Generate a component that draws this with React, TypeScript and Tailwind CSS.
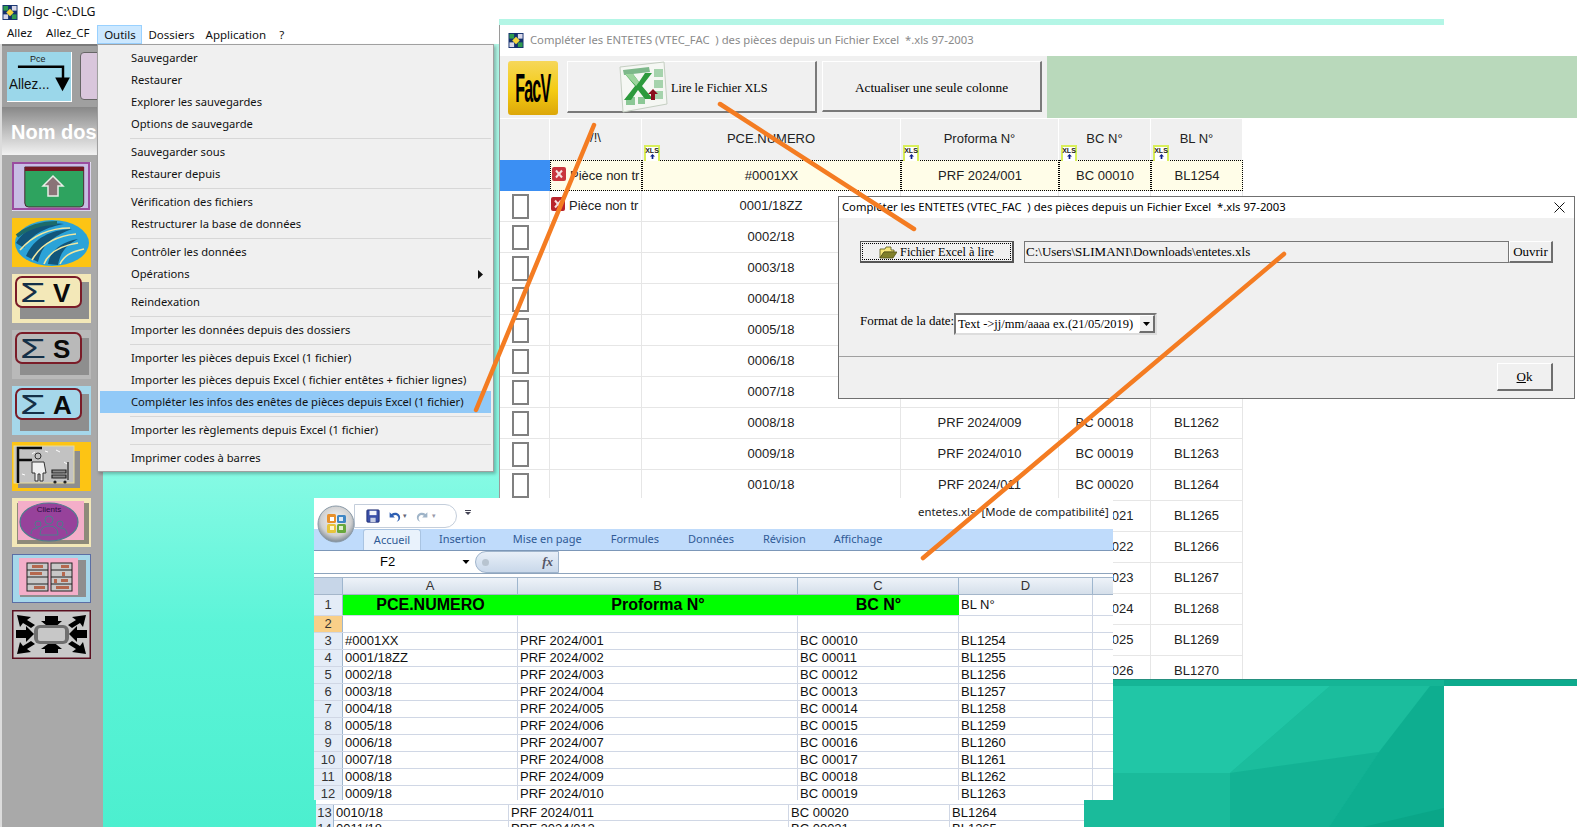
import React from "react";

const uiFont = "font-['Noto_Sans',sans-serif]";
const arial = "font-['Liberation_Sans',Arial,sans-serif]";
const serif = "font-['Liberation_Serif','Times_New_Roman',serif]";

const menuGroups = [
  ["Sauvegarder", "Restaurer", "Explorer les sauvegardes", "Options de sauvegarde"],
  ["Sauvegarder sous", "Restaurer depuis"],
  ["Vérification des fichiers", "Restructurer la base de données"],
  ["Contrôler les données", "Opérations"],
  ["Reindexation"],
  ["Importer les données depuis des dossiers"],
  [
    "Importer les pièces depuis Excel (1 fichier)",
    "Importer les pièces depuis Excel ( fichier entêtes + fichier lignes)",
    "Compléter les infos des enêtes de pièces depuis Excel (1 fichier)",
  ],
  ["Importer les règlements depuis Excel (1 fichier)"],
  ["Imprimer codes à barres"],
];

const pad = (n: number, len: number) => String(n).padStart(len, "0");

const mainRows = Array.from({ length: 17 }).map((_, i) => ({
  pce: i === 0 ? "#0001XX" : i === 1 ? "0001/18ZZ" : `${pad(i, 4)}/18`,
  prf: `PRF 2024/${pad(i + 1, 3)}`,
  bc: `BC ${pad(i + 10, 5)}`,
  bl: `BL${1254 + i}`,
}));

const sheetRows = mainRows.slice(0, 10);

function AppIcon() {
  return (
    <svg viewBox="0 0 16 16" className="w-[16px] h-[15px] shrink-0">
      <rect width="16" height="16" fill="#14306e" />
      <rect x="1" y="1" width="5" height="5" fill="#2f9a4f" />
      <rect x="10" y="1" width="5" height="5" fill="#d8d8e8" />
      <rect x="1" y="10" width="5" height="5" fill="#d8d8e8" />
      <rect x="10" y="10" width="5" height="5" fill="#2f9a4f" />
      <path d="M8 4l4 4-4 4-4-4z" fill="#f5d63a" />
    </svg>
  );
}

function XlsTag() {
  return (
    <div className="absolute left-[2px] -bottom-[1px] w-[16px] h-[16px] bg-white border-x-2 border-t-2 border-[#d9ef5a] flex flex-col items-center leading-none">
      <span className={`${arial} text-[7px] font-bold text-[#222] leading-[7px]`}>XLS</span>
      <svg viewBox="0 0 8 6" className="w-[7px] h-[5px]">
        <path d="M4 0l3 3H5v3H3V3H1z" fill="#0b1f8a" />
      </svg>
    </div>
  );
}

function RedX({ dim }: { dim?: boolean }) {
  return (
    <svg viewBox="0 0 14 14" className="w-[14px] h-[14px] shrink-0 -mt-[4px]">
      <rect width="14" height="14" rx="2" fill={dim ? "#b8242c" : "#c9363d"} />
      <path d="M4 3.5l6 7M10 3.5l-6 7" stroke="#f5e0e0" strokeWidth="2" />
    </svg>
  );
}

function ExcelLogo() {
  return (
    <svg viewBox="0 0 50 52" className="w-[50px] h-[52px] shrink-0">
      <path d="M2 6l44-5 3 42-44 8z" fill="#f5f7f3" stroke="#c5cfc2" />
      <path d="M5 9l26-3 1 5-26 3z" fill="#7db88a" />
      <path d="M36 8h9v8h-9zM36 19h9v8h-9zM36 30h9v8h-9z" fill="#a5d3ac" />
      <path d="M8 36h9v8H8zM20 36h7v7h-7z" fill="#8cc896" />
      <path d="M7 13h8l6 8 6-9h7l-10 13 11 13h-8l-7-9-7 10H6l11-14z" fill="#2c9a3c" />
      <path d="M7 13h8l6 8-3 4z" fill="#9bd49c" />
      <path d="M30 33l5-5 5 5h-3v6h-4v-6z" fill="#8a0f1c" />
    </svg>
  );
}

function SigmaBadge({ bg, inner, letter }: { bg: string; inner: string; letter: string }) {
  return (
    <svg viewBox="0 0 79 49" className="w-[79px] h-[49px]">
      <rect width="79" height="49" fill={bg} />
      <rect x="8" y="8" width="69" height="37" fill="#8e8e8e" />
      <rect x="4" y="3" width="65" height="30" rx="6" fill={inner} stroke="#7a1c28" strokeWidth="2" />
      <text transform="translate(8 28) scale(1.5 1)" fontFamily="Liberation Sans" fontSize="28" fill="#153048">Σ</text>
      <text x="41" y="28" fontFamily="Liberation Sans" fontWeight="bold" fontSize="26" fill="#0a0a0a">{letter}</text>
    </svg>
  );
}

function IconUpload() {
  return (
    <svg viewBox="0 0 79 49" className="w-[79px] h-[49px]">
      <rect width="79" height="49" fill="#c8bde4" stroke="#f4f0fa" />
      <rect x="1" y="1" width="76" height="46" fill="none" stroke="#9a4d9f" strokeWidth="2" />
      <path d="M15 5h64v36q0 4-4 4H19q-4 0-4-4z" transform="translate(-1 0) scale(.92 1)" fill="#2ea35f" stroke="#4a2230" />
      <rect x="13" y="5" width="59" height="4" fill="#731820" />
      <path d="M41 14l10 10h-5v10H36V24h-5z" fill="#8a7377" stroke="#e8efe8" strokeWidth="1.5" />
    </svg>
  );
}

function IconGlobe() {
  return (
    <svg viewBox="0 0 79 49" className="w-[79px] h-[49px]">
      <rect width="79" height="49" fill="#fdc414" />
      <ellipse cx="40" cy="25" rx="37" ry="23" fill="#2ba3d8" />
      <path d="M4 25C14 8 34 4 52 6 36 9 20 15 12 30zM14 38C22 20 38 12 60 11 42 18 30 26 26 44zM36 46c2-12 12-22 30-25-12 6-18 14-20 26z" fill="#12557a" />
      <path d="M8 32c14-16 30-22 50-22M20 42c8-14 22-24 44-26M32 46c4-10 14-18 34-21M48 46c4-8 10-12 24-15" stroke="#f1e7a0" strokeWidth="1.6" fill="none" />
      <path d="M5 18c10-8 24-13 40-13" stroke="#1c6b6a" strokeWidth="4" fill="none" />
    </svg>
  );
}

function IconStaff() {
  return (
    <svg viewBox="0 0 79 49" className="w-[79px] h-[49px]">
      <rect width="79" height="49" fill="#fdc414" />
      <rect x="6" y="9" width="62" height="37" fill="#8e8e8e" />
      <rect x="2" y="4" width="60" height="37" fill="#c2c2c2" stroke="#e7dc9c" />
      <path d="M6 7h4M20 12l3-2M44 8l4 2M52 20l3 2M10 32l3 1M40 36l3-1M33 9l3 1M48 30l4 1" stroke="#fff" />
      <path d="M6 41V6h24M6 18h14" stroke="#0a0a0a" strokeWidth="2.5" fill="none" />
      <circle cx="26" cy="14" r="3" fill="none" stroke="#333" />
      <path d="M20 20h12l2 11h-3v8h-3v-7h-2v7h-3v-8h-3z" fill="#f0f0f0" stroke="#333" />
      <path d="M40 28h14v3H40zM40 33h14v3H40zM56 20v18" stroke="#222" strokeWidth="1.2" fill="#888" />
      <circle cx="43" cy="40" r="1.6" fill="#222" />
      <circle cx="53" cy="40" r="1.6" fill="#222" />
    </svg>
  );
}

function IconClients() {
  return (
    <svg viewBox="0 0 79 49" className="w-[79px] h-[49px]">
      <rect width="79" height="49" fill="#f3e8b8" />
      <rect x="5" y="5" width="72" height="41" fill="#8e8a7a" />
      <rect x="6" y="3" width="66" height="39" fill="#f4aec9" />
      <ellipse cx="37" cy="24" rx="29" ry="19" fill="#97429b" stroke="#4d7c8d" strokeWidth="1.2" />
      <text x="37" y="14" textAnchor="middle" fontFamily="Liberation Sans" fontSize="8" fill="#2a0a40">Clients</text>
      <circle cx="37" cy="22" r="4" fill="none" stroke="#4d7c8d" />
      <circle cx="26" cy="26" r="3" fill="none" stroke="#4d7c8d" />
      <circle cx="48" cy="26" r="3" fill="none" stroke="#4d7c8d" />
      <path d="M28 37q0-9 9-9t9 9zM19 36q0-6 7-6M55 36q0-6-7-6" fill="none" stroke="#4d7c8d" />
    </svg>
  );
}

function IconShelves() {
  return (
    <svg viewBox="0 0 79 49" className="w-[79px] h-[49px]">
      <rect x=".5" y=".5" width="78" height="48" fill="#a5d7ea" stroke="#5b6ea5" />
      <rect x="8" y="6" width="66" height="37" fill="#8e8e8e" />
      <rect x="7" y="4" width="59" height="37" fill="#f4aec9" />
      <rect x="15" y="9" width="21" height="28" fill="#c8c8c8" stroke="#222" />
      <rect x="39" y="9" width="21" height="28" fill="#c8c8c8" stroke="#222" />
      <path d="M15 16h21M15 23h21M15 30h21M39 16h21M39 23h21M39 30h21" stroke="#222" />
      <path d="M20 11h11v3H20zM18 18h12v3H18zM22 32h11v3H22zM49 11h8v3h-8zM42 25h3v4h-3zM49 25h7v3h-7zM44 32h13v3H44zM50 18h3v4h-3z" fill="#b5684e" />
    </svg>
  );
}

function IconResize() {
  return (
    <svg viewBox="0 0 79 49" className="w-[79px] h-[49px]">
      <rect width="79" height="49" fill="#c9c9c9" />
      <rect x=".75" y=".75" width="77.5" height="47.5" fill="none" stroke="#5a1020" strokeWidth="1.5" />
      <path d="M5 5l14 2-4 3 8 5-4 3-8-5-3 4zM74 5l-14 2 4 3-8 5 4 3 8-5 3 4zM5 44l14-2-4-3 8-5-4-3-8 5-3-4zM74 44l-14-2 4-3-8-5 4-3 8 5 3-4zM33 6h13v5h4l-10 9-11-9h4zM33 43h13v-4h4l-10-8-11 8h4zM4 20h10v-4l8 8-8 8v-4H4zM75 20H65v-4l-8 8 8 8v-4h10z" fill="#000" />
      <rect x="22" y="15" width="35" height="19" rx="6" fill="#6f6f6f" />
      <rect x="26" y="18" width="27" height="13" rx="2" fill="#c7c7c7" />
    </svg>
  );
}

function Wallpaper() {
  return (
    <>
      <div className="absolute left-[103px] top-[19px] w-[1341px] h-[808px] bg-[linear-gradient(180deg,#b4f6e6_0%,#86fae4_56%,#5cf4d8_75%,#4cefcf_100%)]" />
      <div className="absolute left-[1084px] top-[679px] w-[360px] h-[148px] bg-[#1abb9b]">
        <svg viewBox="0 0 360 148" className="w-full h-full">
          <path d="M0 0h360v7H0z" fill="#15b596" />
          <path d="M29 7h217L146 94H29z" fill="#21c6a6" />
          <path d="M246 7h100l-51 66-149 21z" fill="#1bbd9d" />
          <path d="M146 94l149-21-50 75h-99z" fill="#13b294" />
          <path d="M346 7h14v141H245l50-75z" fill="#0eae90" />
          <path d="M279 148l81-19v19z" fill="#0aa688" />
          <path d="M0 .5h360" stroke="#24907f" />
        </svg>
      </div>
      <div className="absolute left-[1444px] top-[679px] w-[133px] h-[7px] bg-[#0dab8d] border-t border-[#24907f]" />
    </>
  );
}

function Sidebar() {
  return (
    <div className="absolute left-0 top-[44px] w-[103px] h-[783px] flex flex-col bg-[#a9a9a9] border-l-2 border-[#dcdcdc]">
      <div className="h-[63px] bg-[#a0a0a0] border-t-2 border-[#7a7a7a] flex gap-[8px] pl-[5px] pt-[6px]">
        <div className="relative w-[65px] h-[50px] bg-[#9bd7ea] border-b border-r border-white shrink-0">
          <span className={`absolute left-[23px] top-[1px] ${arial} text-[9px] text-[#222]`}>Pce</span>
          <span className={`absolute left-[2px] top-[23px] ${arial} text-[15px] leading-[17px] scale-x-90 origin-left text-[#111]`}>Allez...</span>
          <svg viewBox="0 0 65 50" className="absolute inset-0 w-full h-full">
            <path d="M11 15h46v16" stroke="#000" strokeWidth="2.5" fill="none" />
            <path d="M49 26h15l-7.500 14z" fill="#000" />
          </svg>
        </div>
        <div className="w-[30px] h-[48px] rounded-[4px] border border-[#666] bg-[#d9c6dc] shrink-0" />
      </div>
      <div className={`h-[48px] bg-[linear-gradient(180deg,#888888_0%,#c4c4c4_55%,#f2f2f2_100%)] flex items-center pl-[9px] pt-[2px] ${arial}`}>
        <span className="text-[20px] font-bold text-white whitespace-nowrap">Nom dos</span>
      </div>
      <div className="flex flex-col gap-[7px] pl-[10px] pt-[7px]">
        <IconUpload />
        <IconGlobe />
        <SigmaBadge bg="#f3e8b8" inner="#f3e8b8" letter="V" />
        <SigmaBadge bg="#b9b9b9" inner="#b9b9b9" letter="S" />
        <SigmaBadge bg="#a5d7ea" inner="#a5d7ea" letter="A" />
        <IconStaff />
        <IconClients />
        <IconShelves />
        <IconResize />
      </div>
    </div>
  );
}

function TopBars() {
  return (
    <div className={`absolute left-0 top-0 w-[499px] h-[44px] bg-white ${uiFont} text-[11.5px] text-[#111]`}>
      <div className="h-[25px] flex items-center gap-[5px] pl-[2px]">
        <AppIcon />
        <span className="whitespace-nowrap text-[12.3px]">Dlgc -C:\DLG</span>
      </div>
      <div className="relative h-[19px] flex items-center">
        <span className="ml-[7px] -mt-[3px]">Allez</span>
        <span className="ml-[14px] -mt-[3px]">Allez_CF</span>
        <span className="ml-[8px] h-[19px] w-[45px] flex items-center justify-center bg-[#cce8ff] border border-[#99d1ff]">Outils</span>
        <span className="ml-[6px]">Dossiers</span>
        <span className="ml-[11px]">Application</span>
        <span className="ml-[13px]">?</span>
      </div>
    </div>
  );
}

function ToolsMenu() {
  return (
    <div className={`absolute left-[97px] top-[44px] w-[397px] h-[428px] bg-[#f0f0f0] border border-[#a0a0a0] shadow-[2px_2px_3px_rgba(0,0,0,0.25)] py-[2px] ${uiFont} text-[11.2px] text-[#111]`}>
      {menuGroups.map((group, g) => (
        <div key={g}>
          {g > 0 && (
            <div className="h-[6px] flex items-center pl-[32px] pr-[2px]">
              <div className="h-px w-full bg-[#d7d7d7]" />
            </div>
          )}
          {group.map((item) => (
            <div
              key={item}
              className={`mx-[2px] h-[22px] flex items-center justify-between pl-[31px] pr-[8px] whitespace-nowrap ${
                item.startsWith("Compléter") ? "bg-[#91c9f7]" : ""
              }`}
            >
              <span>{item}</span>
              {item === "Opérations" && (
                <svg viewBox="0 0 5 9" className="w-[5px] h-[9px]">
                  <path d="M0 0l5 4.500-5 4.500z" fill="#111" />
                </svg>
              )}
            </div>
          ))}
        </div>
      ))}
    </div>
  );
}

function MainWindow() {
  const cellBase = "flex items-center justify-center overflow-hidden whitespace-nowrap";
  return (
    <div className="absolute left-[499px] top-[25px] w-[1078px] h-[654px] bg-white overflow-hidden flex flex-col border-l border-[#9a9a9a]">
      <div className={`h-[31px] shrink-0 flex items-center gap-[6px] pl-[8px] ${uiFont} text-[11.25px] text-[#8a8a8a]`}>
        <AppIcon />
        <span className="whitespace-pre">Compléter les ENTETES (VTEC_FAC  ) des pièces depuis un Fichier Excel  *.xls 97-2003</span>
      </div>
      <div className="h-[62px] shrink-0 flex bg-[#f0f0f0]">
        <div className="w-[547px] shrink-0 flex items-start gap-[5px] pl-[8px] pt-[5px]">
          <div className={`w-[50px] h-[54px] shrink-0 rounded-[3px] bg-[linear-gradient(180deg,#f6d75a_0%,#f4cb12_55%,#dca70a_100%)] flex items-center justify-center overflow-hidden ${arial}`}>
            <span className="text-[40px] font-bold text-black scale-x-[0.4] whitespace-nowrap tracking-tighter">FacV</span>
          </div>
          <div className={`relative ml-[4px] w-[250px] h-[52px] shrink-0 bg-[#f0f0f0] border-t border-l border-white border-r-2 border-b-2 border-r-[#7a7a7a] border-b-[#7a7a7a] flex items-center pl-[50px] gap-[3px] ${serif} text-[12.3px] text-black`}>
            <ExcelLogo />
            <span className="mt-[4px]">Lire le Fichier XLS</span>
          </div>
          <div className={`w-[220px] h-[51px] shrink-0 bg-[#f0f0f0] border-t border-l border-white border-r-2 border-b-2 border-r-[#7a7a7a] border-b-[#7a7a7a] flex items-center justify-center pt-[3px] ${serif} text-[13.3px] text-black`}>
            Actualiser une seule colonne
          </div>
        </div>
        <div className="flex-1 bg-[#b9d9bb]" />
      </div>
      <div className={`w-[743px] ${arial} text-[13px] text-[#222]`}>
        <div className="grid grid-cols-[50px_92px_259px_158px_92px_92px] h-[41px] mt-[1px] bg-[#f0f0f0]">
          <div className="border-r border-white" />
          <div className="border-r border-white flex items-center justify-center pb-[3px]">/!\</div>
          {["PCE.NUMERO", "Proforma N°", "BC N°", "BL N°"].map((h) => (
            <div key={h} className="relative border-r border-white flex items-center justify-center pb-[3px] leading-none">
              {h}
              <XlsTag />
            </div>
          ))}
        </div>
        {mainRows.map((row, i) => {
          const cell =
            i === 0
              ? `${cellBase} bg-[#fffde8] border border-dotted border-black`
              : `${cellBase} border-r border-[#e6e6e6]`;
          return (
            <div key={row.pce} className={`grid grid-cols-[50px_92px_259px_158px_92px_92px] h-[31px] ${i === 0 ? "" : "border-b border-[#e6e6e6]"}`}>
              {i === 0 ? (
                <div className="bg-[#3b8ff3]" />
              ) : (
                <div className="border-r border-[#e6e6e6] flex items-center pl-[12px]">
                  <div className="w-[17px] h-[25px] bg-white border-2 border-[#808080]" />
                </div>
              )}
              <div className={`${cell} !justify-start pl-px gap-[4px]`}>
                {i < 2 && <RedX dim={i === 1} />}
                {i < 2 && <span>Pièce non tr</span>}
              </div>
              <div className={cell}>{row.pce}</div>
              <div className={cell}>{row.prf}</div>
              <div className={cell}>{row.bc}</div>
              <div className={cell}>{row.bl}</div>
            </div>
          );
        })}
      </div>
    </div>
  );
}

function FolderIcon() {
  return (
    <svg viewBox="0 0 18 13" className="w-[18px] h-[13px] shrink-0">
      <path d="M1 3h5l1-2h5v3h3v2H5L1 12z" fill="#f5e67a" stroke="#55551a" strokeWidth=".8" />
      <path d="M5 6h13l-4 6H1z" fill="#80802a" stroke="#55551a" strokeWidth=".8" />
    </svg>
  );
}

function ImportDialog() {
  const raised = "bg-[#f0f0f0] border-t border-l border-white border-r-2 border-b-2 border-r-[#6e6e6e] border-b-[#6e6e6e]";
  return (
    <div className="absolute left-[838px] top-[196px] w-[737px] h-[203px] flex flex-col bg-[#f0f0f0] border border-[#707070]">
      <div className={`h-[21px] shrink-0 bg-white flex items-center justify-between pl-[3px] pr-[9px] ${uiFont} text-[11.25px] text-black`}>
        <span className="whitespace-pre">Compléter les ENTETES (VTEC_FAC  ) des pièces depuis un Fichier Excel  *.xls 97-2003</span>
        <svg viewBox="0 0 11 11" className="w-[11px] h-[11px]">
          <path d="M.5.5l10 10M10.500.5l-10 10" stroke="#111" />
        </svg>
      </div>
      <div className={`h-[138px] shrink-0 ${serif} text-[13px] text-black pl-[21px] pr-[21px] pt-[23px]`}>
        <div className="flex items-stretch h-[22px]">
          <div className="w-[154px] flex border border-[#555] bg-[#f0f0f0] border-r-2 border-b-2 p-px">
            <div className="flex-1 flex items-center justify-center gap-[3px] pt-[2px] border border-dotted border-black text-[12.3px]">
              <FolderIcon />
              <span>Fichier Excel à lire</span>
            </div>
          </div>
          <div className="ml-[10px] flex-1 flex items-center pl-px bg-[#f0f0f0] border border-[#777]">
            C:\Users\SLIMANI\Downloads\entetes.xls
          </div>
          <div className={`w-[44px] flex items-center justify-center ${raised}`}>Ouvrir</div>
        </div>
        <div className="flex items-center mt-[50px] h-[22px]">
          <span className="w-[94px] shrink-0 whitespace-nowrap -mt-[7px]">Format de la date:</span>
          <div className="w-[203px] h-[22px] flex items-center justify-between bg-white border-2 border-t-[#777] border-l-[#777] border-b-[#ddd] border-r-[#ddd] pl-[2px]">
            <span className="whitespace-nowrap text-[12.5px]">Text -&gt;jj/mm/aaaa ex.(21/05/2019)</span>
            <div className={`w-[16px] h-[18px] flex items-center justify-center ${raised}`}>
              <svg viewBox="0 0 7 4" className="w-[7px] h-[4px]">
                <path d="M0 0h7L3.500 4z" fill="#000" />
              </svg>
            </div>
          </div>
        </div>
      </div>
      <div className={`flex-1 border-t border-[#a0a0a0] flex justify-end items-start pt-[6px] pr-[21px] ${serif} text-[13px]`}>
        <div className={`w-[56px] h-[28px] flex items-center justify-center ${raised}`}>
          <span><u>O</u>k</span>
        </div>
      </div>
    </div>
  );
}

function OfficeOrb() {
  return (
    <svg viewBox="0 0 38 38" className="absolute left-[3px] top-[7px] w-[38px] h-[38px]">
      <defs>
        <radialGradient id="orb" cx="50%" cy="40%" r="60%">
          <stop offset="0%" stopColor="#f8f8f8" />
          <stop offset="70%" stopColor="#cfcfcf" />
          <stop offset="100%" stopColor="#7f8a94" />
        </radialGradient>
      </defs>
      <circle cx="19" cy="19" r="18" fill="url(#orb)" stroke="#8a9aa8" />
      <rect x="10" y="9" width="9" height="9" rx="1.5" fill="#e8912c" />
      <rect x="20" y="10" width="9" height="8" rx="1.5" fill="#3f86c4" />
      <rect x="10" y="19" width="9" height="9" rx="1.5" fill="#e8c43a" />
      <rect x="20" y="19" width="9" height="9" rx="1.5" fill="#68a83c" />
      <rect x="13" y="12" width="4" height="4" fill="#fff" />
      <rect x="22" y="12" width="4" height="4" fill="#dbe9f5" />
      <rect x="13" y="21" width="4" height="4" fill="#fff5cf" />
      <rect x="22" y="21" width="4" height="4" fill="#dff0cf" />
    </svg>
  );
}

function SheetRow({ label, cols, row, selected }: { label: string; cols: string; row: string[]; selected?: boolean }) {
  return (
    <div className={`grid ${cols} h-[17px] border-b border-[#d0d7e5] leading-[16px]`}>
      <div className={`text-center text-[13px] border-r border-[#9eb6ce] ${selected ? "bg-[#f9cf88]" : "bg-[#e4ecf7]"} text-[#333]`}>{label}</div>
      {row.map((v, i) => (
        <div key={i} className="pl-[2px] border-r border-[#d0d7e5] overflow-hidden whitespace-nowrap">{v}</div>
      ))}
      <div />
    </div>
  );
}

function ExcelWindow() {
  const cols = "grid-cols-[29px_175px_280px_161px_134px_17px]";
  const tabs = ["Insertion", "Mise en page", "Formules", "Données", "Révision", "Affichage"];
  const tabGaps = ["ml-[18px]", "ml-[27px]", "ml-[29px]", "ml-[29px]", "ml-[29px]", "ml-[28px]"];
  return (
    <div className="absolute left-[314px] top-[498px] w-[799px] h-[302px] bg-white flex flex-col overflow-hidden">
      <div className={`relative h-[31px] shrink-0 ${uiFont} text-[11.4px] text-[#222]`}>
        <div className="absolute left-[40px] top-[6px] w-[103px] h-[24px] rounded-r-full border border-[#c4cedb] bg-white flex items-center gap-[7px] pl-[11px]">
          <svg viewBox="0 0 16 16" className="w-[14px] h-[14px]">
            <rect x="1" y="1" width="14" height="14" rx="1" fill="#3a4fa8" stroke="#1c2a70" />
            <rect x="4" y="2" width="8" height="5" fill="#f2f4fa" />
            <rect x="5" y="10" width="6" height="5" fill="#c8cfe5" />
          </svg>
          <svg viewBox="0 0 16 14" className="w-[14px] h-[13px]">
            <path d="M3 2v6h6L7 6c3-2 6 0 6 3 0 2-1 3-2 4 3-1 4-3 4-5 0-5-6-7-10-4z" fill="#2d5fb3" />
          </svg>
          <span className="text-[7px] text-[#667] -ml-[5px]">▾</span>
          <svg viewBox="0 0 16 14" className="w-[14px] h-[13px] ml-[2px]">
            <path d="M13 2v6H7l2-2C6 4 3 6 3 9c0 2 1 3 2 4-3-1-4-3-4-5 0-5 6-7 10-4z" fill="#9fb4c8" />
          </svg>
          <span className="text-[7px] text-[#99a] -ml-[5px]">▾</span>
        </div>
        <div className="absolute left-[150px] top-[12px] w-[7px] flex flex-col items-center">
          <div className="w-[6px] h-px bg-[#445] mb-[1px]" />
          <svg viewBox="0 0 6 3" className="w-[6px] h-[3px]">
            <path d="M0 0h6L3 3z" fill="#445" />
          </svg>
        </div>
        <OfficeOrb />
        <span className="absolute left-[604px] top-[5px] whitespace-pre">entetes.xls  [Mode de compatibilité]</span>
      </div>
      <div className={`h-[22px] shrink-0 bg-[#bfdbfb] border-b border-[#7c97b8] flex items-end pl-[49px] ${uiFont} text-[11px] text-[#2f5a96]`}>
        <div className="w-[58px] h-[21px] bg-[#e9f2fc] border border-b-0 border-[#a9c4e2] rounded-t-[3px] flex items-center justify-center">Accueil</div>
        {tabs.map((t, i) => (
          <span key={t} className={`${tabGaps[i]} h-[21px] flex items-center`}>{t}</span>
        ))}
      </div>
      <div className={`h-[23px] shrink-0 flex border-b border-[#8ea4bd] ${arial} text-[13px] text-black`}>
        <div className="w-[161px] shrink-0 flex items-center justify-between pl-[66px] pr-[5px]">
          <span>F2</span>
          <svg viewBox="0 0 7 4" className="w-[8px] h-[4px]">
            <path d="M0 0h7L3.500 4z" fill="#000" />
          </svg>
        </div>
        <div className="w-[84px] shrink-0 rounded-l-full bg-[linear-gradient(180deg,#e8eff8,#c9d8ea)] border border-[#9fb4cc] flex items-center justify-between pl-[6px] pr-[5px]">
          <div className="w-[7px] h-[7px] rounded-full bg-[#b8c4d0]" />
          <span className={`${serif} italic text-[13px] font-bold text-[#556]`}>fx</span>
        </div>
      </div>
      <div className={`flex-1 pt-[3px] ${arial} text-[13px] text-[#111] leading-none`}>
        <div className={`grid ${cols} h-[18px] bg-[linear-gradient(180deg,#eef3f9,#d5dfea)] border-y border-[#a4b6ca] text-[#333]`}>
          <div className="bg-[#c7d6e8] border-r border-[#9eb6ce]" />
          {["A", "B", "C", "D"].map((c) => (
            <div key={c} className="text-center border-r border-[#9eb6ce] leading-[16px]">{c}</div>
          ))}
          <div />
        </div>
        <div className={`grid ${cols} h-[21px] border-b border-[#d0d7e5]`}>
          <div className="bg-[#e4ecf7] border-r border-[#9eb6ce] text-center leading-[20px] text-[#333]">1</div>
          {["PCE.NUMERO", "Proforma N°", "BC N°"].map((h) => (
            <div key={h} className="bg-[#00ff00] text-[16px] font-bold text-center leading-[19px] text-black">{h}</div>
          ))}
          <div className="pl-[2px] border-r border-[#d0d7e5] leading-[20px]">BL N°</div>
          <div />
        </div>
        <SheetRow label="2" cols={cols} row={["", "", "", ""]} selected />
        {sheetRows.map((r, i) => (
          <SheetRow key={r.pce} label={String(i + 3)} cols={cols} row={[r.pce, r.prf, r.bc, r.bl]} />
        ))}
      </div>
    </div>
  );
}

function ExcelOverflow() {
  const cols = "grid-cols-[18px_175px_280px_161px_134px]";
  const row10 = mainRows[10];
  return (
    <div className={`absolute left-[316px] top-[800px] w-[768px] h-[27px] bg-white overflow-hidden pt-[4px] ${arial} text-[13px] text-[#111]`}>
      <div className={`grid ${cols} h-[17px] border-y border-[#d0d7e5] leading-[16px]`}>
        <div className="bg-[#e4ecf7] border-r border-[#9eb6ce] text-[#333] text-center">13</div>
        <div className="pl-[2px] border-r border-[#d0d7e5]">0010/18</div>
        <div className="pl-[2px] border-r border-[#d0d7e5]">{row10.prf}</div>
        <div className="pl-[2px] border-r border-[#d0d7e5]">{row10.bc}</div>
        <div className="pl-[2px]">{row10.bl}</div>
      </div>
      <div className={`grid ${cols} h-[17px] leading-[16px]`}>
        <div className="bg-[#e4ecf7] border-r border-[#9eb6ce] text-[#333] text-center">14</div>
        <div className="pl-[2px] border-r border-[#d0d7e5]">0011/18</div>
        <div className="pl-[2px] border-r border-[#d0d7e5]">PRF 2024/012</div>
        <div className="pl-[2px] border-r border-[#d0d7e5]">BC 00021</div>
        <div className="pl-[2px]">BL1265</div>
      </div>
    </div>
  );
}

function Arrows() {
  return (
    <svg viewBox="0 0 1577 827" className="absolute inset-0 w-[1577px] h-[827px] pointer-events-none">
      <g stroke="#f47c22" strokeWidth="4.500" strokeLinecap="round" fill="none">
        <path d="M594 125L476 410" />
        <path d="M720 104L914 229" />
        <path d="M1284 254L923 558" />
      </g>
    </svg>
  );
}

export default function App() {
  return (
    <div className="relative w-[1577px] h-[827px] overflow-hidden bg-white">
      <Wallpaper />
      <MainWindow />
      <Sidebar />
      <TopBars />
      <ToolsMenu />
      <ExcelWindow />
      <ExcelOverflow />
      <ImportDialog />
      <Arrows />
    </div>
  );
}
